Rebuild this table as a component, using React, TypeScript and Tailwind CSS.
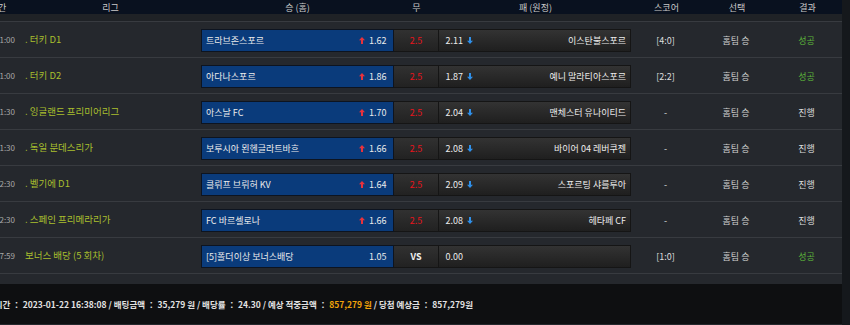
import React from "react";

type Row = {
  time: string;
  league: string;
  home: string;
  homeOdd: string;
  draw: string;
  awayOdd: string;
  away: string;
  score: string;
  pick: string;
  result: string;
  bonus?: boolean;
};

const rows: Row[] = [
  { time: "21:00", league: ". 터키 D1", home: "트라브존스포르", homeOdd: "1.62", draw: "2.5", awayOdd: "2.11", away: "이스탄불스포르", score: "[4:0]", pick: "홈팀 승", result: "성공" },
  { time: "21:00", league: ". 터키 D2", home: "아다나스포르", homeOdd: "1.86", draw: "2.5", awayOdd: "1.87", away: "예니 말라티아스포르", score: "[2:2]", pick: "홈팀 승", result: "성공" },
  { time: "21:30", league: ". 잉글랜드 프리미어리그", home: "아스날 FC", homeOdd: "1.70", draw: "2.5", awayOdd: "2.04", away: "맨체스터 유나이티드", score: "-", pick: "홈팀 승", result: "진행" },
  { time: "21:30", league: ". 독일 분데스리가", home: "보루시아 묀헨글라트바흐", homeOdd: "1.66", draw: "2.5", awayOdd: "2.08", away: "바이어 04 레버쿠젠", score: "-", pick: "홈팀 승", result: "진행" },
  { time: "22:30", league: ". 벨기에 D1", home: "클뤼프 브뤼허 KV", homeOdd: "1.64", draw: "2.5", awayOdd: "2.09", away: "스포르팅 샤를루아", score: "-", pick: "홈팀 승", result: "진행" },
  { time: "22:30", league: ". 스페인 프리메라리가", home: "FC 바르셀로나", homeOdd: "1.66", draw: "2.5", awayOdd: "2.08", away: "헤타페 CF", score: "-", pick: "홈팀 승", result: "진행" },
  { time: "17:59", league: "보너스 배당 (5 회차)", home: "[5]폴더이상 보너스배당", homeOdd: "1.05", draw: "VS", awayOdd: "0.00", away: "", score: "[1:0]", pick: "홈팀 승", result: "성공", bonus: true },
];

const font = { fontFamily: '"Noto Sans CJK KR", "Noto Sans", sans-serif' };

function UpArrow() {
  return (
    <svg width="6" height="7" viewBox="0 0 6 7" className="mr-[4px]">
      <path d="M3 0 L6 3.2 L4 3.2 L4 7 L2 7 L2 3.2 L0 3.2 Z" fill="#e8323c" />
    </svg>
  );
}

function DownArrow() {
  return (
    <svg width="6" height="7" viewBox="0 0 6 7" className="ml-[4px]">
      <path d="M3 7 L6 3.8 L4 3.8 L4 0 L2 0 L2 3.8 L0 3.8 Z" fill="#2f90ea" />
    </svg>
  );
}

export default function App() {
  return (
    <div className="w-[850px] h-[325px] overflow-hidden flex bg-[#25282d]" style={font}>
      <div className="w-[842px] h-full overflow-hidden">
        <div className="w-[872px] ml-[-30px] flex flex-col">
          {/* header */}
          <div className="h-[14px] bg-[#09111f] flex items-center text-[9px] text-[#c9c9c9] leading-none">
            <div className="w-[50px] text-center pl-[6px]">시간</div>
            <div className="w-[181px] text-center">리그</div>
            <div className="w-[193px] text-center">승 (홈)</div>
            <div className="w-[45px] text-center">무</div>
            <div className="w-[193px] text-center">패 (원정)</div>
            <div className="w-[69px] text-center">스코어</div>
            <div className="w-[72px] text-center">선택</div>
            <div className="w-[69px] text-center">결과</div>
          </div>
          <div className="h-[8px] bg-[#1f2226] border-b border-[#383b40]" />
          {rows.map((r, i) => (
            <div key={i} className="h-[36px] flex items-center border-b border-[#383b40] text-[9px] leading-none pt-[1px]">
              <div className="w-[50px] text-right pr-[5px] text-[8px] text-[#a8a8a8]">{r.time}</div>
              <div className="w-[181px] pl-[5px] text-[9.5px] text-[#a9bf2e]">{r.league}</div>
              <div className="w-[430px] flex h-[23px]">
                <div className="w-[193px] h-full flex items-center bg-[#0a3b7b] border border-[#0d1420] pl-[4px] pr-[6px] text-[#ececec]">
                  <span className="flex-1">{r.home}</span>
                  {!r.bonus && <UpArrow />}
                  <span>{r.homeOdd}</span>
                </div>
                <div className="w-[45px] h-full flex items-center justify-center bg-gradient-to-b from-[#313131] to-[#222222] border-y border-[#151515]">
                  <span className={r.bonus ? "text-[#f0f0f0] font-bold" : "text-[#e8141c]"}>{r.draw}</span>
                </div>
                <div className="w-[193px] h-full flex items-center bg-gradient-to-b from-[#333333] to-[#1f1f1f] border border-[#151515] pl-[6px] pr-[4px] text-[#ececec]">
                  <span>{r.awayOdd}</span>
                  {!r.bonus && <DownArrow />}
                  <span className="flex-1 text-right">{r.away}</span>
                </div>
              </div>
              <div className="w-[69px] text-center text-[#dedede]">{r.score}</div>
              <div className="w-[72px] text-center text-[#d0d0d0]">{r.pick}</div>
              <div className={"w-[69px] text-center " + (r.result === "성공" ? "text-[#5cb43a]" : "text-[#dedede]")}>{r.result}</div>
            </div>
          ))}
          <div className="h-[10px]" />
          <div className="h-[40px] bg-[#0e0f11] flex items-center pl-[9px] text-[8.5px] font-bold text-[#e2e2e2] leading-none whitespace-pre">
            <span>배팅시간 ： 2023-01-22 16:38:08 / 배팅금액 ： 35,279 원 / 배당률 ： 24.30 / 예상 적중금액 ： </span>
            <span className="text-[#f0a30a]">857,279 원</span>
            <span> / 당첨 예상금 ： 857,279원</span>
          </div>
        </div>
      </div>
      <div className="w-[8px] h-full bg-[#15181c]" />
    </div>
  );
}
